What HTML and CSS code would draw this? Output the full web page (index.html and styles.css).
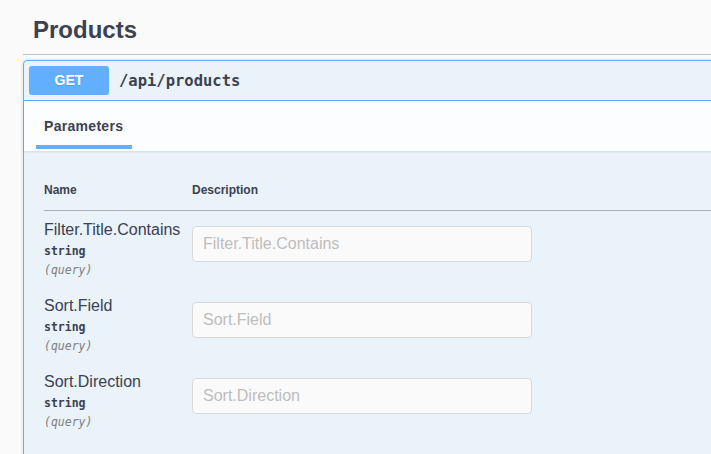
FILE: index.html
```html
<!DOCTYPE html>
<html>
<head>
<meta charset="utf-8">
<link rel="stylesheet" href="styles.css">
</head>
<body>
<div class="wrapper">
  <h3 class="tag">Products</h3>
  <div class="opblock">
    <div class="summary">
      <span class="method">GET</span>
      <span class="path">/api/products</span>
    </div>
    <div class="section-header">
      <div class="tab">Parameters</div>
    </div>
    <div class="table-container">
      <table class="params">
        <thead>
          <tr><th class="col-name">Name</th><th>Description</th></tr>
        </thead>
        <tbody>
          <tr>
            <td class="col-name">
              <div class="pname">Filter.Title.Contains</div>
              <div class="ptype">string</div>
              <div class="pin">(query)</div>
            </td>
            <td><input class="pinput" type="text" placeholder="Filter.Title.Contains"></td>
          </tr>
          <tr>
            <td class="col-name">
              <div class="pname">Sort.Field</div>
              <div class="ptype">string</div>
              <div class="pin">(query)</div>
            </td>
            <td><input class="pinput" type="text" placeholder="Sort.Field"></td>
          </tr>
          <tr>
            <td class="col-name">
              <div class="pname">Sort.Direction</div>
              <div class="ptype">string</div>
              <div class="pin">(query)</div>
            </td>
            <td><input class="pinput" type="text" placeholder="Sort.Direction"></td>
          </tr>
        </tbody>
      </table>
    </div>
  </div>
</div>
</body>
</html>
```
FILE: styles.css
```css
html, body {
  margin: 0;
  padding: 0;
  background: #fafafa;
  overflow: hidden;
  font-family: "Liberation Sans", Arial, sans-serif;
  color: #3b4151;
}
.wrapper {
  margin-left: 23px;
  width: 820px;
}
.tag {
  margin: 0 0 5px;
  padding: 16px 0 10px 10px;
  font-size: 24px;
  font-weight: bold;
  line-height: normal;
  border-bottom: 1px solid rgba(59, 65, 81, 0.3);
}
.opblock {
  border: 1px solid #61affe;
  border-radius: 4px;
  background: rgba(97, 175, 254, 0.1);
  box-shadow: 0 0 3px rgba(0, 0, 0, 0.19);
}
.summary {
  display: flex;
  align-items: center;
  padding: 5px;
  border-bottom: 1px solid #61affe;
}
.method {
  display: block;
  width: 80px;
  height: 29px;
  line-height: 29px;
  text-align: center;
  background: #61affe;
  color: #fff;
  border-radius: 3px;
  font-size: 14px;
  font-weight: bold;
  text-shadow: 0 1px 0 rgba(0, 0, 0, 0.1);
}
.path {
  padding: 0 10px;
  font-family: "DejaVu Sans Mono", "Liberation Mono", monospace;
  font-size: 15.5px;
  font-weight: bold;
  color: #3b4151;
}
.section-header {
  height: 50px;
  box-sizing: border-box;
  padding: 0 20px;
  background: rgba(255, 255, 255, 0.8);
  box-shadow: 0 1px 2px rgba(0, 0, 0, 0.1);
  display: flex;
  align-items: center;
}
.tab {
  position: relative;
  font-size: 14px;
  font-weight: bold;
  letter-spacing: 0.3px;
}
.tab::after {
  content: "";
  position: absolute;
  left: -8px;
  right: -9px;
  height: 4px;
  bottom: -15px;
  background: #61affe;
}
.table-container {
  padding: 20px;
}
.params {
  border-collapse: collapse;
  width: 100%;
}
.params th {
  text-align: left;
  font-size: 12px;
  font-weight: bold;
  padding: 12px 0;
  line-height: 15px;
  border-bottom: 1px solid rgba(59, 65, 81, 0.2);
}
.params td {
  padding: 10px 0;
  vertical-align: top;
}
.col-name {
  width: 148px;
}
.pname {
  font-size: 16px;
  line-height: 18px;
}
.ptype {
  font-family: "DejaVu Sans Mono", "Liberation Mono", monospace;
  font-size: 11.5px;
  font-weight: bold;
  padding: 5px 0;
  line-height: 14px;
}
.pin {
  font-family: "DejaVu Sans Mono", "Liberation Mono", monospace;
  font-size: 11.5px;
  font-style: italic;
  color: #808080;
  line-height: 14px;
}
.pinput {
  display: block;
  box-sizing: border-box;
  width: 340px;
  height: 36px;
  margin: 5px 0 0;
  padding: 8px 10px;
  border: 1px solid #d9d9d9;
  border-radius: 4px;
  background: #fafafa;
  font-family: "Liberation Sans", Arial, sans-serif;
  font-size: 16px;
  color: #3b4151;
  outline: none;
}
.pinput::placeholder {
  color: #bdbdbd;
}
```
